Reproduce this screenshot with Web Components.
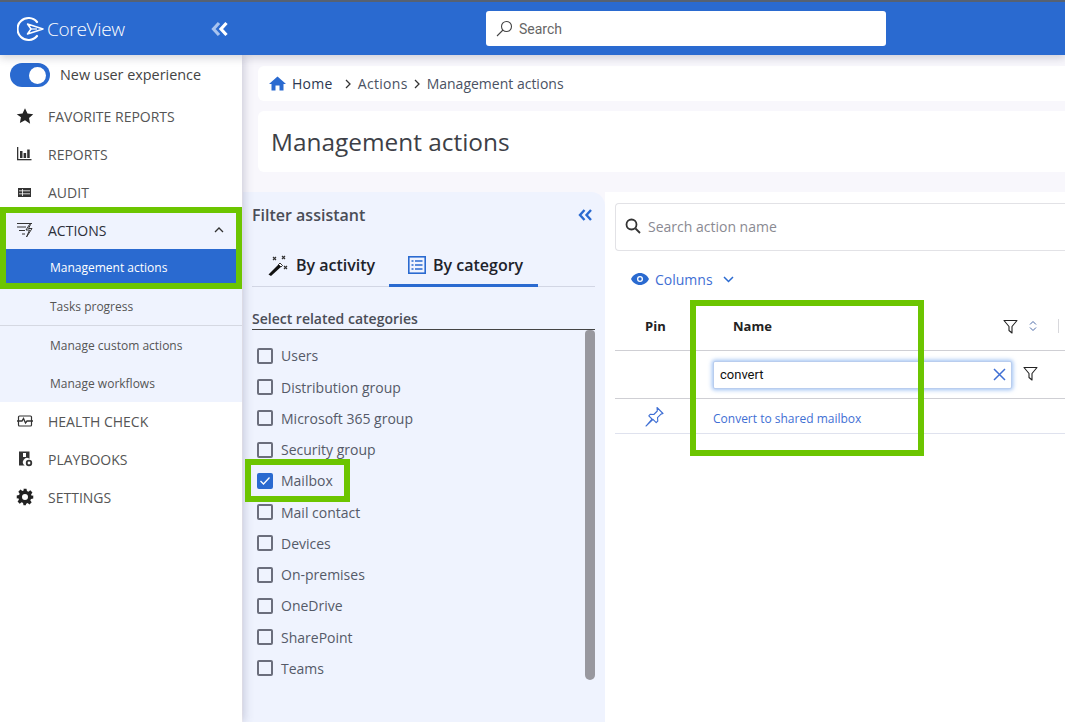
<!DOCTYPE html>
<html>
<head>
<meta charset="utf-8">
<title>Management actions</title>
<style>
  html, body { margin: 0; height: 100%; overflow: hidden; background: #fff; }
  body { font-family: "Open Sans", "Liberation Sans", sans-serif; position: relative; }
</style>
</head>
<body>
<cv-app></cv-app>
<cv-mark style="left:0;top:207px;width:242px;height:82px"></cv-mark>
<cv-mark style="left:245px;top:459px;width:105px;height:43px"></cv-mark>
<cv-mark style="left:690px;top:300px;width:234px;height:156px"></cv-mark>

<script>
// little helper, all the elements below use it
function shadow(el, html) {
  el.attachShadow({ mode: "open" }).innerHTML = html;
}

const ICONS = {
  star: '<svg width="18" height="18" viewBox="0 0 24 24"><path fill="#222" d="M12 1.5l3.3 7 7.7 1-5.6 5.3 1.4 7.6L12 17.7l-6.800 3.700 1.400-7.600L1 9.500l7.700-1z"/></svg>',
  bars: '<svg width="18" height="18" viewBox="0 0 18 18" fill="#333"><rect x="1" y="2" width="1.300" height="13"/><rect x="1" y="14" width="14.500" height="1.300"/><rect x="4" y="6" width="2.500" height="7"/><rect x="7.600" y="8" width="2.500" height="5"/><rect x="11.200" y="4.500" width="2.500" height="8.500"/></svg>',
  table: '<svg width="18" height="18" viewBox="0 0 18 18"><rect x="2" y="5" width="13" height="9" fill="#333"/><path stroke="#fff" stroke-width=".8" d="M3 7.800h11M3 10.800h11M6.500 6v7"/></svg>',
  bolt: '<svg width="18" height="18" viewBox="0 0 18 18" fill="none" stroke="#333" stroke-width="1"><path d="M1 2.500h15M1 6h9M3 9.500h6M6 13h3"/><path d="M13.500 3.500L10 9h3.500l-3 7 5.500-8.500h-3.500l2-4z" fill="#eff3fe"/></svg>',
  health: '<svg width="18" height="18" viewBox="0 0 18 18" fill="none" stroke="#333" stroke-width="1.200"><rect x="2.500" y="4" width="13" height="10" rx="1"/><path d="M1 9h5l1.500-2.500 2 4.500 1.500-2h6" stroke-width="1.300"/></svg>',
  playbook: '<svg width="18" height="18" viewBox="0 0 18 18"><path fill="#333" d="M3 1.500h10.500v7.300a4 4 0 0 0-4.800 6.700H3z"/><rect x="7" y="3" width="3" height="4" fill="#fff"/><circle cx="13" cy="13" r="2.300" fill="none" stroke="#333" stroke-width="1.800"/></svg>',
  gear: '<svg width="18" height="18" viewBox="0 0 24 24"><path fill="#222" fill-rule="evenodd" d="M10 1h4l.6 3.100 1.900.8 2.600-1.800 2.800 2.800-1.800 2.600.8 1.900L23 10v4l-3.100.6-.8 1.900 1.800 2.600-2.800 2.800-2.600-1.800-1.900.8L13 23h-3l-.6-3.100-1.900-.8-2.600 1.800-2.800-2.800 1.800-2.600-.8-1.900L1 14v-4l3.100-.6.8-1.900L3.100 4.900l2.800-2.800 2.600 1.800 1.900-.8zM12 8a4 4 0 1 0 0 8 4 4 0 0 0 0-8z"/></svg>',
  funnel: '<svg width="15" height="15" viewBox="0 0 15 15"><path fill="none" stroke="#222" stroke-width="1.100" stroke-linejoin="round" d="M1 1.500h13L9 7.500V14l-3-2.500v-4z"/></svg>'
};

class CvHeader extends HTMLElement {
  constructor() {
    super();
    shadow(this, `
    <style>
      :host { display: flex; height: 53px; background: #2a6ad0; border-top: 2px solid #566172; position: relative; z-index: 3; box-shadow: 0 3px 8px rgba(60,60,80,.22); }
      .brand { width: 242px; flex: none; display: flex; align-items: center; box-sizing: border-box; padding-left: 17px; color: #fff; }
      .brand span { font-size: 19px; font-weight: 300; margin-left: 3px; letter-spacing: -.3px; }
      .back { margin-left: 86px; }
      .search { margin: 9px 0 0 244px; width: 400px; height: 35px; background: #fff; border-radius: 3px; display: flex; align-items: center; box-sizing: border-box; padding-left: 10px; font: 14px Roboto, "Liberation Sans", sans-serif; color: #666; }
      .search svg { margin-right: 6px; }
    </style>
    <div class="brand">
      <svg width="27" height="26" viewBox="0 0 27 26" fill="none">
        <path d="M20 6A11 11 0 1 0 20 20" stroke="#fff" stroke-width="2.200" stroke-linecap="round"/>
        <path d="M10.500 8L26 13 10.500 18l3.500-5z" stroke="#fff" stroke-width="1.500" stroke-linejoin="round"/>
        <path d="M14 13H20" stroke="#fff" stroke-width="1.200"/>
      </svg>
      <span>CoreView</span>
      <svg class="back" width="18" height="16" viewBox="0 0 18 16" fill="none" stroke-width="3.200">
        <path d="M8 2L2.500 8 8 14" stroke="#a8c3ef"/>
        <path d="M15.500 2L10 8l5.500 6" stroke="#fff"/>
      </svg>
    </div>
    <div class="search">
      <svg width="17" height="17" viewBox="0 0 17 17" fill="none" stroke="#444" stroke-width="1.100"><circle cx="10.500" cy="6.500" r="5"/><path d="M7 10L1 16"/></svg>
      Search
    </div>`);
  }
}

class CvNavItem extends HTMLElement {
  constructor() {
    super();
    const ic = ICONS[this.getAttribute("icon")] || "";
    shadow(this, `
    <style>
      :host { display: flex; align-items: center; height: 38px; padding-left: 16px; font-size: 14px; color: #555; }
      :host([open]) { background: #eff3fe; color: #2c2f3a; }
      .ic { width: 18px; height: 18px; margin-right: 14px; display: block; }
      .caret { margin-left: auto; margin-right: 18px; }
    </style>
    <span class="ic">${ic}</span><slot></slot>
    ${this.hasAttribute("open") ? '<svg class="caret" width="10" height="6" viewBox="0 0 10 6" fill="none" stroke="#333" stroke-width="1.300"><path d="M1 5l4-4 4 4"/></svg>' : ""}`);
  }
}

class CvSubItem extends HTMLElement {
  constructor() {
    super();
    shadow(this, `
    <style>
      :host { display: flex; align-items: center; height: 38px; box-sizing: border-box; padding-left: 50px; font-size: 12px; color: #555; background: #eff3fe; }
      :host([active]) { height: 34px; margin-bottom: 5px; padding-top: 3px; background: #2a6ad0; color: #fff; font-weight: 500; }
      :host([line]) { border-bottom: 1px solid #d5d8e2; }
    </style>
    <slot></slot>`);
  }
}

class CvSidebar extends HTMLElement {
  constructor() {
    super();
    shadow(this, `
    <style>
      :host { display: block; width: 242px; flex: none; background: #fff; position: relative; z-index: 2; box-shadow: 2px 0 9px rgba(70,70,110,.25); }
      .toggle { height: 42px; display: flex; align-items: center; box-sizing: border-box; padding: 0 0 2px 10px; font-size: 14.400px; color: #444; font-weight: 500; }
      .toggle span { margin-bottom: 2px; }
      .switch { width: 40px; height: 24px; border-radius: 12px; background: #2a6ad0; margin-right: 10px; display: flex; justify-content: flex-end; align-items: center; padding-right: 4px; box-sizing: border-box; }
      .switch i { width: 17px; height: 17px; border-radius: 50%; background: #fff; display: block; }
    </style>
    <div class="toggle"><div class="switch"><i></i></div><span>New user experience</span></div>
    <slot></slot>`);
  }
}

class CvCrumbs extends HTMLElement {
  constructor() {
    super();
    shadow(this, `
    <style>
      :host { display: flex; align-items: center; height: 35px; margin: 11px 0 0 16px; padding-left: 11px; background: #fff; border-radius: 6px 0 0 6px; font-size: 14px; color: #4a5263; }
      svg { flex: none; }
      .home { margin-right: 6px; color: #2c3750; margin-left: 6px; }
      .wide { letter-spacing: .3px; }
      .sep { margin: 0 6px 0 6px; }
      .sep2 { margin: 0 6px 0 6px; }
    </style>
    <svg width="17" height="15" viewBox="0 0 17 15"><path fill="#2a6ad0" d="M8.500 0.500L17 8h-2.500v6.500H10.500V9.500h-4v5H2.500V8H0z"/></svg>
    <span class="home wide">Home</span>
    <svg class="sep" width="7" height="10" viewBox="0 0 7 10" fill="none" stroke="#333" stroke-width="1.300"><path d="M1 1l4 4-4 4"/></svg>
    <span class="wide">Actions</span>
    <svg class="sep2" width="7" height="10" viewBox="0 0 7 10" fill="none" stroke="#333" stroke-width="1.300"><path d="M1 1l4 4-4 4"/></svg>
    <span>Management actions</span>`);
  }
}

class CvTitle extends HTMLElement {
  constructor() {
    super();
    shadow(this, `
    <style>
      :host { display: flex; align-items: center; height: 61px; margin: 10px 0 20px 16px; padding-left: 13px; background: #fff; border-radius: 6px 0 0 6px; font-size: 24.400px; color: #3d3f47; }
    </style>
    <slot></slot>`);
  }
}

class CvCheck extends HTMLElement {
  constructor() {
    super();
    const on = this.hasAttribute("checked");
    shadow(this, `
    <style>
      :host { display: flex; align-items: center; height: 31.250px; font-size: 14px; color: #555a68; }
      .box { width: 16px; height: 16px; box-sizing: border-box; border: 2px solid #6b6e7c; border-radius: 2px; margin-right: 8px; display: block; }
      :host([checked]) .box { background: #2a6ad0; border-color: #2a6ad0; position: relative; }
      svg { display: block; }
    </style>
    <span class="box">${on ? '<svg width="12" height="12" viewBox="0 0 12 12" fill="none" stroke="#fff" stroke-width="1.300"><path d="M1.500 6l3 3L10.500 2.500"/></svg>' : ""}</span><slot></slot>`);
  }
}

class CvFilterPanel extends HTMLElement {
  constructor() {
    super();
    shadow(this, `
    <style>
      :host { display: block; width: 362px; flex: none; margin-left: 1px; box-sizing: border-box; background: #eff3fe; border-radius: 0 14px 0 0; padding: 0 10px 0 9px; position: relative; }
      .top { display: flex; justify-content: space-between; align-items: center; height: 46px; font-size: 16px; font-weight: 600; color: #4a4d57; }
      .top svg { margin-right: 2px; }
      .tabs { display: flex; height: 47px; border-bottom: 1px solid #d2d6e4; box-sizing: border-box; margin-top: 2px; }
      .tab { display: flex; align-items: center; font-size: 16px; font-weight: 600; color: #20222a; box-sizing: border-box; height: 47px; padding-top: 3px; }
      .tab.a { padding-left: 15px; width: 137px; }
      .tab.a svg { margin-right: 7px; }
      .tab.b { width: 149px; padding-left: 19px; padding-top: 6px; border-bottom: 3px solid #2a6ad0; }
      .tab.b svg { margin-right: 7px; }
      h4 { margin: 21px 0 0; font-size: 14px; font-weight: 600; color: #4a4d57; height: 21px; line-height: 22px; border-bottom: 1px solid #444; }
      .list { position: relative; height: 350px; padding: 10.300px 0 0 5px; box-sizing: border-box; }
      .bar { position: absolute; right: 0; top: 0; bottom: 0; width: 10px; background: #98989f; border-radius: 4px 4px 5px 5px; }
    </style>
    <div class="top">Filter assistant
      <svg width="15" height="12" viewBox="0 0 15 12" fill="none" stroke="#2a6ad0" stroke-width="2.400"><path d="M6.500 1L2 6l4.500 5M13 1L8.500 6l4.500 5"/></svg>
    </div>
    <div class="tabs">
      <div class="tab a">
        <svg width="22" height="22" viewBox="0 0 22 22"><path d="M1.500 20.500L13 9l2.500 2.500L4 22z" fill="#111"/><path d="M11.500 10.500L13 9l2.500 2.500-1.500 1.500z" fill="#fff" stroke="#111" stroke-width=".8"/><path stroke="#333" stroke-width="1.200" d="M6 3l3 3M9 3L6 6M15 2l3 3M18 2l-3 3M17 12l3 3M20 12l-3 3"/></svg>
        By activity
      </div>
      <div class="tab b">
        <svg width="18" height="18" viewBox="0 0 18 18" fill="none" stroke="#2a6ad0"><rect x=".8" y=".8" width="16.400" height="16.400" stroke-width="1.600"/><path stroke-width="1.400" d="M3.500 5h2M7 5h7.500M3.500 9h2M7 9h7.500M3.500 13h2M7 13h7.500"/></svg>
        By category
      </div>
    </div>
    <h4>Select related categories</h4>
    <div class="list"><slot></slot><div class="bar"></div></div>`);
  }
}

class CvActionsTable extends HTMLElement {
  constructor() {
    super();
    shadow(this, `
    <style>
      :host { display: block; flex: 1; min-width: 0; background: #fff; padding: 11px 0 0 10px; font-size: 14px; }
      .find { display: flex; align-items: center; height: 48px; border: 1px solid #e2e2e6; border-right: 0; border-radius: 4px 0 0 4px; box-sizing: border-box; padding: 0 0 2px 9px; color: #8a8a92; }
      .find svg { margin-right: 7px; }
      .cols { display: flex; align-items: center; height: 54px; box-sizing: border-box; padding: 2px 0 0 16px; color: #3f6fd4; }
      .cols .e { margin-right: 6px; }
      .cols .c { margin-left: 10px; }
      .row { display: grid; grid-template-columns: 98px 299px 1fr; align-items: center; border-bottom: 1px solid #cfcfd4; }
      .head { height: 42px; padding-bottom: 3px; font-size: 13px; font-weight: 700; color: #222; box-sizing: content-box; }
      .head .pin { padding-left: 30px; }
      .head .name { padding-left: 20px; display: flex; align-items: center; }
      .head .tools { margin-left: auto; display: flex; align-items: center; gap: 11px; }
      .rule { width: 1px; height: 14px; background: #d8d8dc; margin-left: 10px; margin-right: -47px; }
      .fil { height: 47px; }
      .fil .f { margin: 2px 0 0 11px; display: block; }
      .inp { height: 28px; background: #fff; border-radius: 2px; border: 1px solid #b9cdee; box-shadow: 0 0 4px 1px rgba(90,150,235,.6); display: flex; align-items: center; justify-content: space-between; box-sizing: border-box; padding: 0 5px 0 6px; font: 13px Roboto, "Liberation Sans", sans-serif; color: #111; }
      .res { height: 34px; border-bottom-color: #dfe2ee; font-size: 12px; color: #3f6fd4; }
      .res .p { padding-left: 29px; display: block; height: 21px; }
      .res div { padding-top: 4px; }
    </style>
    <div class="find">
      <svg width="16" height="16" viewBox="0 0 16 16" fill="none" stroke="#333" stroke-width="1.800"><circle cx="6.500" cy="6.500" r="5"/><path d="M10.500 10.500L15 15"/></svg>
      Search action name
    </div>
    <div class="cols">
      <svg class="e" width="18" height="12" viewBox="0 0 18 12"><path fill="#2a6ad0" fill-rule="evenodd" d="M9 0c4 0 7.300 2.500 9 6-1.700 3.500-5 6-9 6s-7.300-2.500-9-6c1.700-3.500 5-6 9-6zm0 3a3 3 0 1 0 0 6 3 3 0 0 0 0-6z"/><circle cx="9" cy="6" r="1.700" fill="#2a6ad0"/></svg>
      Columns
      <svg class="c" width="11" height="7" viewBox="0 0 11 7" fill="none" stroke="#2a6ad0" stroke-width="1.500"><path d="M1 1l4.500 4.500L10 1"/></svg>
    </div>
    <div class="row head">
      <div class="pin">Pin</div>
      <div class="name">Name
        <span class="tools">${ICONS.funnel}
          <svg width="8" height="12" viewBox="0 0 8 12" fill="none" stroke="#4a6aa8" stroke-width="1"><path d="M1 4.500L4 1.500 7 4.500M1 7.500l3 3 3-3"/></svg>
          <span class="rule"></span>
        </span>
      </div>
    </div>
    <div class="row fil">
      <div></div>
      <div class="inp">convert
        <svg width="13" height="13" viewBox="0 0 13 13" fill="none" stroke="#3f6fd4" stroke-width="1.500"><path d="M1 1l11 11M12 1L1 12"/></svg>
      </div>
      <span class="f">${ICONS.funnel}</span>
    </div>
    <div class="row res">
      <span class="p"><svg width="21" height="21" viewBox="0 0 21 21" fill="none" stroke="#3f6fd4" stroke-width="1.100" stroke-linejoin="round"><path d="M13 1.500l6 6-2 .6-3.500 3.500.3 3.400-1.600 1.600-3.200-3.200L2 20l6-7-3.200-3.200 1.600-1.600 3.400.3L13.300 5z"/></svg></span>
      <div>Convert to shared mailbox</div>
    </div>`);
  }
}

class CvMain extends HTMLElement {
  constructor() {
    super();
    shadow(this, `
    <style>
      :host { display: flex; flex-direction: column; flex: 1; min-width: 0; background: #f8f7fc; height: 667px; overflow: hidden; }
      .body { display: flex; flex: 1; min-height: 0; }
    </style>
    <cv-crumbs></cv-crumbs>
    <cv-title>Management actions</cv-title>
    <div class="body">
      <cv-filter-panel>
        <cv-check>Users</cv-check>
        <cv-check>Distribution group</cv-check>
        <cv-check>Microsoft 365 group</cv-check>
        <cv-check>Security group</cv-check>
        <cv-check checked>Mailbox</cv-check>
        <cv-check>Mail contact</cv-check>
        <cv-check>Devices</cv-check>
        <cv-check>On-premises</cv-check>
        <cv-check>OneDrive</cv-check>
        <cv-check>SharePoint</cv-check>
        <cv-check>Teams</cv-check>
      </cv-filter-panel>
      <cv-actions-table></cv-actions-table>
    </div>`);
  }
}

class CvApp extends HTMLElement {
  constructor() {
    super();
    shadow(this, `
    <style>
      :host { display: block; height: 722px; }
      .row { display: flex; height: 667px; }
    </style>
    <cv-header></cv-header>
    <div class="row">
      <cv-sidebar>
        <cv-nav-item icon="star">FAVORITE REPORTS</cv-nav-item>
        <cv-nav-item icon="bars">REPORTS</cv-nav-item>
        <cv-nav-item icon="table">AUDIT</cv-nav-item>
        <cv-nav-item icon="bolt" open>ACTIONS</cv-nav-item>
        <cv-sub-item active>Management actions</cv-sub-item>
        <cv-sub-item line>Tasks progress</cv-sub-item>
        <cv-sub-item>Manage custom actions</cv-sub-item>
        <cv-sub-item>Manage workflows</cv-sub-item>
        <cv-nav-item icon="health">HEALTH CHECK</cv-nav-item>
        <cv-nav-item icon="playbook">PLAYBOOKS</cv-nav-item>
        <cv-nav-item icon="gear">SETTINGS</cv-nav-item>
      </cv-sidebar>
      <cv-main></cv-main>
    </div>`);
  }
}

// the green annotation frames drawn over the screenshot
class CvMark extends HTMLElement {
  constructor() {
    super();
    shadow(this, `
    <style>
      :host { position: absolute; display: block; box-sizing: border-box; border: 6px solid #6cc500; z-index: 10; }
    </style>`);
  }
}

customElements.define("cv-header", CvHeader);
customElements.define("cv-nav-item", CvNavItem);
customElements.define("cv-sub-item", CvSubItem);
customElements.define("cv-sidebar", CvSidebar);
customElements.define("cv-crumbs", CvCrumbs);
customElements.define("cv-title", CvTitle);
customElements.define("cv-check", CvCheck);
customElements.define("cv-filter-panel", CvFilterPanel);
customElements.define("cv-actions-table", CvActionsTable);
customElements.define("cv-main", CvMain);
customElements.define("cv-app", CvApp);
customElements.define("cv-mark", CvMark);
</script>
</body>
</html>
